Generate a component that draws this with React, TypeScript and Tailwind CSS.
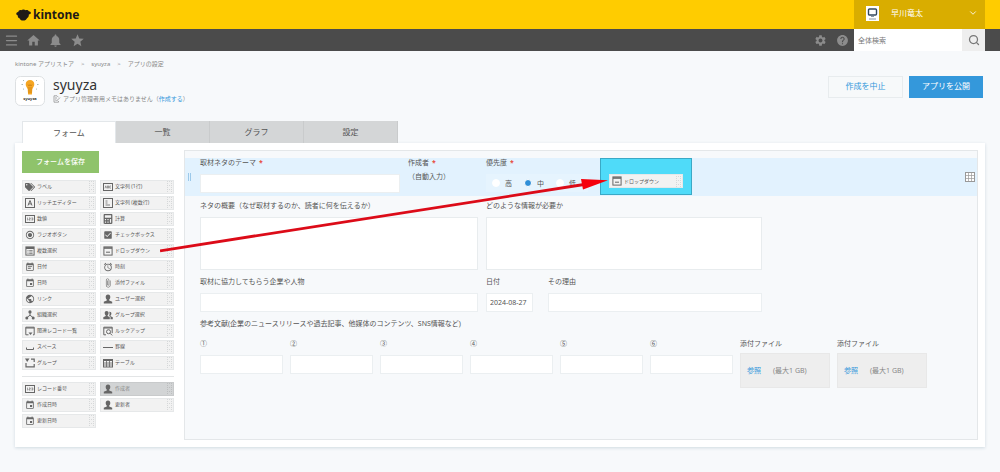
import { useState, type ReactNode } from "react";
import { FaCalculator, FaTags } from "react-icons/fa";
import {
  MdAlarm,
  MdAttachFile,
  MdCheckBox,
  MdEvent,
  MdEventNote,
  MdHelp,
  MdHome,
  MdNotifications,
  MdPublic,
  MdRadioButtonChecked,
  MdSettings,
  MdStar,
} from "react-icons/md";
import { ChevronDown, Menu, Search } from "lucide-react";

// 10x10 outlined icons used by the field palette
function Glyph({ children }: { children: ReactNode }) {
  return (
    <svg viewBox="0 0 10 10" className="size-[10px]" fill="none" stroke="currentColor" strokeWidth="1">
      {children}
    </svg>
  );
}

const PersonIcon = () => (
  <Glyph>
    <path
      d="M5 .5c1.6 0 2.3 1 2.3 2.4S6.6 5.2 6.2 5.600v.9l3 1.300V9.500H.8V7.800l3-1.300v-.9C3.400 5.200 2.700 4.300 2.700 2.900S3.400.5 5 .5z"
      fill="currentColor"
      stroke="none"
    />
  </Glyph>
);

const GroupIcon = () => (
  <Glyph>
    <path
      d="M3.600 1c1.300 0 2 .8 2 2s-.6 1.900-1 2.300v.8l2.200 1.100v2H.3v-2l2.400-1.100v-.8c-.4-.4-1-1.100-1-2.300s.6-2 1.900-2z"
      fill="currentColor"
      stroke="none"
    />
    <path
      d="M6.600 1.800c1.200 0 1.800.7 1.800 1.700s-.5 1.700-.9 2v.7l2.300 1v2H7.500V6.900l-1.400-.8c.5-.9.7-3 .1-4.300z"
      fill="currentColor"
      stroke="none"
    />
  </Glyph>
);

const NumberIcon = () => (
  <Glyph>
    <rect x=".5" y="1.500" width="9" height="7" />
    <path d="M2.500 3.600v2.800M4 3.900h1.200v1.100H4v1.100h1.400M6.500 3.900h1.300v2.200H6.500M6.600 5h1" strokeWidth=".6" />
  </Glyph>
);

const TextIcon = () => (
  <Glyph>
    <rect x=".5" y="1.500" width="9" height="7" />
    <path d="M2 6.300l.8-2.500.8 2.500M4.500 3.900v2.200h1V3.900zM8 4H6.700v2.100H8" strokeWidth=".6" />
  </Glyph>
);

const MultiTextIcon = () => (
  <Glyph>
    <rect x=".5" y=".5" width="9" height="9" />
    <path d="M2.500 3h2M2.500 5h2M2.500 7h4.500" strokeWidth=".8" />
  </Glyph>
);

const RichIcon = () => (
  <Glyph>
    <rect x=".5" y=".5" width="9" height="9" />
    <path d="M3 7.500l2-5 2 5M3.700 5.900h2.600" />
  </Glyph>
);

const MultiSelectIcon = () => (
  <Glyph>
    <rect x=".9" y=".9" width="8.200" height="8.200" />
    <path d="M1 2h8" strokeWidth="2" />
    <path d="M2.500 4.500h1M4.200 4.500h3.400M2.500 6h1M4.200 6h3.400M2.500 7.500h1M4.200 7.500h3.400" strokeWidth=".7" />
  </Glyph>
);

const DropdownIcon = () => (
  <Glyph>
    <rect x=".9" y=".9" width="8.200" height="8.200" />
    <path d="M1 2h8" strokeWidth="1.600" />
    <path d="M3 6.200h4" />
  </Glyph>
);

const OrgIcon = () => (
  <Glyph>
    <circle cx="5" cy="1.900" r="1.600" fill="currentColor" stroke="none" />
    <path d="M5 3v2.200M2 7.500L5 5.200l3 2.300" />
    <circle cx="1.800" cy="8" r="1.500" fill="currentColor" stroke="none" />
    <circle cx="8.200" cy="8" r="1.500" fill="currentColor" stroke="none" />
  </Glyph>
);

const RelatedIcon = () => (
  <Glyph>
    <path d="M3.500 8.800H.8V1.200h8.400v7.600H8M.8 2h8.400" />
    <path d="M3.500 6.500h4L5.500 9z" fill="currentColor" stroke="none" />
  </Glyph>
);

const LookupIcon = () => (
  <Glyph>
    <path d="M3 8.800H.8V1.200h8.400v6M.8 2h8.400" />
    <circle cx="5.500" cy="5.700" r="2" />
    <path d="M7 7.200l2.200 2.200" />
  </Glyph>
);

const SpaceIcon = () => (
  <Glyph>
    <path d="M1.500 5.500v2h7v-2" />
  </Glyph>
);

const LineIcon = () => (
  <Glyph>
    <path d="M0 5.500h10" />
  </Glyph>
);

const BracketIcon = () => (
  <Glyph>
    <path d="M6 1.200h3.200V4M9.200 6v2.800H1V5" strokeWidth="1.200" />
    <path d="M0 .5h4.500L2.200 4z" fill="currentColor" stroke="none" />
  </Glyph>
);

const TableIcon = () => (
  <Glyph>
    <rect x=".5" y="1.500" width="9" height="7.500" />
    <path d="M0 2h10" strokeWidth="2" />
    <path d="M0 5h10M0 7h10M3.500 2v7M6.500 2v7" strokeWidth=".8" />
  </Glyph>
);

type Item = { label: string; icon: ReactNode; disabled?: boolean };

const FIELDS: Item[] = [
  { label: "ラベル", icon: <FaTags /> },
  { label: "文字列 (1行)", icon: <TextIcon /> },
  { label: "リッチエディター", icon: <RichIcon /> },
  { label: "文字列 (複数行)", icon: <MultiTextIcon /> },
  { label: "数値", icon: <NumberIcon /> },
  { label: "計算", icon: <FaCalculator /> },
  { label: "ラジオボタン", icon: <MdRadioButtonChecked /> },
  { label: "チェックボックス", icon: <MdCheckBox /> },
  { label: "複数選択", icon: <MultiSelectIcon /> },
  { label: "ドロップダウン", icon: <DropdownIcon /> },
  { label: "日付", icon: <MdEventNote /> },
  { label: "時刻", icon: <MdAlarm /> },
  { label: "日時", icon: <MdEvent /> },
  { label: "添付ファイル", icon: <MdAttachFile /> },
  { label: "リンク", icon: <MdPublic /> },
  { label: "ユーザー選択", icon: <PersonIcon /> },
  { label: "組織選択", icon: <OrgIcon /> },
  { label: "グループ選択", icon: <GroupIcon /> },
  { label: "関連レコード一覧", icon: <RelatedIcon /> },
  { label: "ルックアップ", icon: <LookupIcon /> },
  { label: "スペース", icon: <SpaceIcon /> },
  { label: "罫線", icon: <LineIcon /> },
  { label: "グループ", icon: <BracketIcon /> },
  { label: "テーブル", icon: <TableIcon /> },
];

const SYSTEM_FIELDS: Item[] = [
  { label: "レコード番号", icon: <NumberIcon /> },
  { label: "作成者", icon: <PersonIcon />, disabled: true },
  { label: "作成日時", icon: <MdEvent /> },
  { label: "更新者", icon: <PersonIcon /> },
  { label: "更新日時", icon: <MdEvent /> },
];

const TABS = ["フォーム", "一覧", "グラフ", "設定"];
const REFERENCES = ["①", "②", "③", "④", "⑤", "⑥"];

function PaletteItem({ label, icon, disabled }: Item) {
  return (
    <button
      type="button"
      disabled={disabled}
      className={`flex h-[14px] w-[74px] items-center border pl-[2px] pr-px text-[5px] leading-none ${
        disabled ? "border-[#c8cacb] bg-[#d2d4d5] text-[#8a8a8a]" : "border-[#e6e8e9] bg-[#f2f2f2] text-[#555]"
      }`}
    >
      <span className="mr-[2px] flex size-[10px] shrink-0 items-center justify-center text-[10px] text-[#666]">{icon}</span>
      <span className="whitespace-nowrap">{label}</span>
      <svg viewBox="0 0 5 11" className="ml-auto h-[11px] w-[5px] shrink-0" fill={disabled ? "#bcbebf" : "#d6d8d9"}>
        {[0, 2, 4, 6, 8, 10].map((y) => (
          <path key={y} d={`M0 ${y}h1v1H0zM4 ${y}h1v1h-1z${y % 4 === 0 ? `M2 ${y}h1v1h-1z` : ""}`} />
        ))}
      </svg>
    </button>
  );
}

function Label({ text, required, htmlFor }: { text: string; required?: boolean; htmlFor?: string }) {
  return (
    <label htmlFor={htmlFor} className="block whitespace-nowrap leading-[10px]">
      {text}
      {required && <span className="ml-[3px] font-bold text-[#e74c3c]">*</span>}
    </label>
  );
}

function TextField({ id, label, width, required, value }: { id: string; label: string; width: string; required?: boolean; value?: string }) {
  return (
    <div>
      <Label text={label} required={required} htmlFor={id} />
      <input id={id} type="text" defaultValue={value} className={`mt-[6px] block h-[19px] border border-[#ebeff1] bg-white px-[3px] ${width}`} />
    </div>
  );
}

function TextArea({ id, label, width }: { id: string; label: string; width: string }) {
  return (
    <div>
      <Label text={label} htmlFor={id} />
      <textarea id={id} className={`mt-[6px] block h-[53px] resize-none border border-[#e8ecee] bg-white ${width}`} />
    </div>
  );
}

function FileField() {
  return (
    <div>
      <div className="leading-[10px]">添付ファイル</div>
      <div className="mt-1 flex h-[35px] w-[90px] items-center gap-3 border border-[#e8e8e8] bg-[#eee] pl-[6px]">
        <button type="button" className="text-[#3498db]">参照</button>
        <span className="text-[#888]">(最大1 GB)</span>
      </div>
    </div>
  );
}

function Header() {
  return (
    <header>
      <div className="flex h-[29px] items-stretch justify-between bg-[#ffcc00] px-4 pr-[15px]">
        <a href="#" className="flex items-center gap-[2px] text-[#1f1a17]">
          <svg viewBox="0 0 15 12" className="h-[12px] w-[15px]" fill="currentColor">
            <path d="M5.200 1.200C6.200.1 8.600.1 9.600 1.200c1.300-.5 2.800 0 3.200 1.100 1.500.1 2.500 1.300 1.900 2.200-.5.7-1.400.8-1.900.9.200 1.300-.2 2.900-1.600 3.600-.7 1.700-2.400 2.700-4.200 2.600-1.700 0-2.900-.9-3.500-2.300C2.200 8.800 1.600 7.800 1.900 6.600.6 6.300-.2 5 .5 4c.5-.8 1.300-.9 1.800-1 .2-1.400 1.600-2.200 2.900-1.800z" />
          </svg>
          <span className="text-[12px] font-bold leading-none">kintone</span>
        </a>
        <button type="button" className="flex w-[131px] items-center bg-[#d9ad00] pb-[3px] pl-[12px] pr-[7px] text-[8px] text-white">
          <svg viewBox="0 0 13 15" className="h-[15px] w-[13px]">
            <rect width="13" height="15" fill="#fff" />
            <rect x="2.500" y="3" width="8" height="6" rx="1" fill="none" stroke="#34495e" strokeWidth="1.400" />
            <path d="M5 10.500h3M3 13h7" stroke="#8a98a5" />
          </svg>
          <span className="ml-[12px]">早川竜太</span>
          <ChevronDown className="ml-auto size-[10px]" />
        </button>
      </div>
      <div className="flex h-[22px] items-center bg-[#4b4b4b] pl-1 pr-[15px] text-[#8c8c8c]">
        <button type="button" aria-label="メニュー"><Menu className="size-[15px]" /></button>
        <button type="button" aria-label="ポータル" className="ml-[7px]"><MdHome className="size-[15px]" /></button>
        <button type="button" aria-label="通知" className="ml-[7px]"><MdNotifications className="size-[15px]" /></button>
        <button type="button" aria-label="お気に入り" className="ml-[7px]"><MdStar className="size-[15px]" /></button>
        <button type="button" aria-label="設定メニュー" className="ml-auto"><MdSettings className="size-[13px]" /></button>
        <button type="button" aria-label="ヘルプ" className="ml-[9px] mr-[5px]"><MdHelp className="size-[13px]" /></button>
        <form className="flex h-full w-[131px]">
          <input
            type="text"
            aria-label="全体検索"
            placeholder="全体検索"
            className="min-w-0 flex-1 bg-white px-1 text-[7px] placeholder:text-[#777]"
          />
          <button type="button" aria-label="検索" className="flex w-[23px] items-center justify-center bg-[#eee] text-[#777]">
            <Search className="size-[12px]" strokeWidth={2.5} />
          </button>
        </form>
      </div>
    </header>
  );
}

function AppHeading() {
  return (
    <div className="mt-2 flex items-start">
      <svg viewBox="0 0 30 30" className="size-[30px]">
        <rect x=".5" y=".5" width="29" height="29" rx="5" fill="#fff" stroke="#dde0e2" />
        <path d="M15 4c2.600 0 4.300 1.900 4.300 4.200 0 2.100-1.300 3.200-2 5l-.4 5.300h-3.800l-.4-5.300c-.7-1.800-2-2.900-2-5C10.700 5.900 12.400 4 15 4z" fill="#f5a623" />
        <path d="M13 8.500l1 1.500L15 8.500l1 1.500L17 8.500M14 11v6M16 11v6" stroke="#c97b10" strokeWidth=".7" fill="none" />
        <path d="M6.500 8.500h1.500M22 8.500h1.500M8 4l1 1M22 4l-1 1M8 13.500l1-.8M22 13.500l-1-.8" stroke="#9fb2ad" strokeWidth=".9" />
        <text x="15" y="23.500" textAnchor="middle" fontSize="4" fontWeight="700" fill="#333">syuyza</text>
      </svg>
      <div className="ml-2">
        <h1 className="text-[14px] leading-[18px] text-[#333]">syuyza</h1>
        <p className="mt-px flex items-center text-[6px] leading-[8px] text-[#888]">
          <svg viewBox="0 0 8 8" className="mr-[2px] size-[8px]" fill="none" stroke="#888" strokeWidth=".7">
            <path d="M5.500 6v1.200H1V.8h3l1.500 1.500M2 3h2M2 5h1" />
            <path d="M3.800 5.800L7 2.600M3.800 5.800l.2-1.100" />
          </svg>
          アプリ管理者用メモはありません（<a href="#" className="text-[#3498db]">作成する</a>）
        </p>
      </div>
      <div className="ml-auto mr-[2px] flex gap-[6px] text-[8px]">
        <button type="button" className="h-[22px] w-[75px] border border-[#e8ecee] bg-[#f7f9fa] pb-[2px] text-[#3498db]">作成を中止</button>
        <button type="button" className="h-[22px] w-[74px] bg-[#3498db] pb-[2px] text-white">アプリを公開</button>
      </div>
    </div>
  );
}

function Palette() {
  return (
    <aside className="w-[152px] shrink-0 pb-3">
      <button type="button" className="h-[22px] w-[77px] bg-[#8fc36b] text-[7px] font-medium text-white">フォームを保存</button>
      <div className="mt-[7px] grid grid-cols-2 gap-x-1 gap-y-[2px] border-b border-[#e3e5e6] pb-[6px]">
        {FIELDS.map((item) => (
          <PaletteItem key={item.label} {...item} />
        ))}
      </div>
      <div className="mt-[5px] grid grid-cols-2 gap-x-1 gap-y-[2px]">
        {SYSTEM_FIELDS.map((item) => (
          <PaletteItem key={item.label} {...item} />
        ))}
      </div>
    </aside>
  );
}

function FormCanvas() {
  const [priority, setPriority] = useState("中");

  return (
    <section className="min-w-0 flex-1 border border-[#e4e7e9] bg-[#f7f9fb] pt-[7px] text-[7px] text-[#555]">
      <div className="flex h-[38px] bg-[#e2f2fe]">
        <div className="flex w-[15px] shrink-0 items-center pl-[3px]">
          <span className="h-2 w-[3px] border-x border-[#9cc9ea]" />
        </div>
        <div className="flex gap-2">
          <TextField id="theme" label="取材ネタのテーマ" width="w-[200px]" required />
          <div className="w-[70px]">
            <Label text="作成者" required />
            <div className="mt-1 leading-[10px]">（自動入力）</div>
          </div>
          <fieldset className="w-[106px]">
            <legend className="leading-[10px]">
              優先度<span className="ml-[3px] font-bold text-[#e74c3c]">*</span>
            </legend>
            <div className="mt-[6px] flex h-[18px] w-[102px] items-center bg-[#e6f4fe] pl-[6px]">
              {["高", "中", "低"].map((level) => (
                <label key={level} className="flex w-[34px] items-center gap-[5px]">
                  <input
                    type="radio"
                    name="priority"
                    checked={priority === level}
                    onChange={() => setPriority(level)}
                    className="size-2 appearance-none rounded-full border border-white bg-white checked:bg-[#2f8fd8]"
                  />
                  {level}
                </label>
              ))}
            </div>
          </fieldset>
          <div className="flex h-[37px] w-[92px] items-center justify-center border border-[#3aa9c6] bg-[#4fdbf9] pt-[9px]">
            <PaletteItem label="ドロップダウン" icon={<DropdownIcon />} />
          </div>
        </div>
        <button type="button" aria-label="テーブルにする" className="ml-auto mr-[2px] self-center">
          <svg viewBox="0 0 10 10" className="size-[10px]" fill="#fff" stroke="#999" strokeWidth="1">
            <rect x=".5" y=".5" width="9" height="9" />
            <path d="M0 3.500h10M0 6.500h10M3.500 0v10M6.500 0v10" strokeWidth=".7" />
          </svg>
        </button>
      </div>

      <div className="flex flex-col gap-[7px] pl-[15px] pt-[5px]">
        <div className="flex gap-2">
          <TextArea id="outline" label="ネタの概要（なぜ取材するのか、読者に何を伝えるか）" width="w-[278px]" />
          <TextArea id="info" label="どのような情報が必要か" width="w-[276px]" />
        </div>
        <div className="flex gap-2">
          <TextField id="people" label="取材に協力してもらう企業や人物" width="w-[278px]" />
          <div className="w-[54px]">
            <TextField id="date" label="日付" width="w-[47px]" value="2024-08-27" />
          </div>
          <TextField id="reason" label="その理由" width="w-[214px]" />
        </div>
        <p className="leading-[10px]">参考文献(企業のニュースリリースや過去記事、他媒体のコンテンツ、SNS情報など)</p>
        <div className="flex gap-[7px] pt-[3px]">
          {REFERENCES.map((mark, i) => (
            <TextField key={mark} id={`ref-${i}`} label={mark} width="w-[83px]" />
          ))}
          <FileField />
          <FileField />
        </div>
      </div>
    </section>
  );
}

export default function App() {
  const [tab, setTab] = useState("フォーム");

  return (
    <div
      lang="ja"
      className="relative min-h-screen bg-[#f7f9fb] font-['Noto_Sans','Noto_Sans_CJK_JP',sans-serif] leading-none text-[#555]"
    >
      <Header />
      <main className="px-[15px] pb-6 pt-[9px]">
        <nav className="flex gap-[7px] text-[6px] leading-[8px] text-[#888]">
          <a href="#">kintone アプリストア</a>
          <span>&gt;</span>
          <a href="#">syuyza</a>
          <span>&gt;</span>
          <a href="#">アプリの設定</a>
        </nav>
        <AppHeading />

        <div className="mt-[15px] flex pl-[7px] text-[8px]">
          {TABS.map((name) => (
            <button
              key={name}
              type="button"
              onClick={() => setTab(name)}
              className={`h-[22px] w-[94px] ${
                tab === name ? "border border-b-0 border-[#e3e7ea] bg-white" : "border-r border-[#c9cbcc] bg-[#d4d6d7]"
              }`}
            >
              {name}
            </button>
          ))}
        </div>
        <div className="flex gap-[10px] bg-white px-[7px] py-[7px] shadow-[0_1px_3px_rgba(120,150,170,0.3)]">
          <Palette />
          <FormCanvas />
        </div>
      </main>

      {/* drag guide from the palette to the drop target */}
      <svg viewBox="0 0 450 80" className="pointer-events-none absolute left-[160px] top-[176px] h-[80px] w-[450px]">
        <path d="M0 74.800L424 8.500" stroke="#dc0b18" strokeWidth="2.800" />
        <path d="M421 3l27 1.300L423 13.500z" fill="#f5000c" />
      </svg>
    </div>
  );
}
